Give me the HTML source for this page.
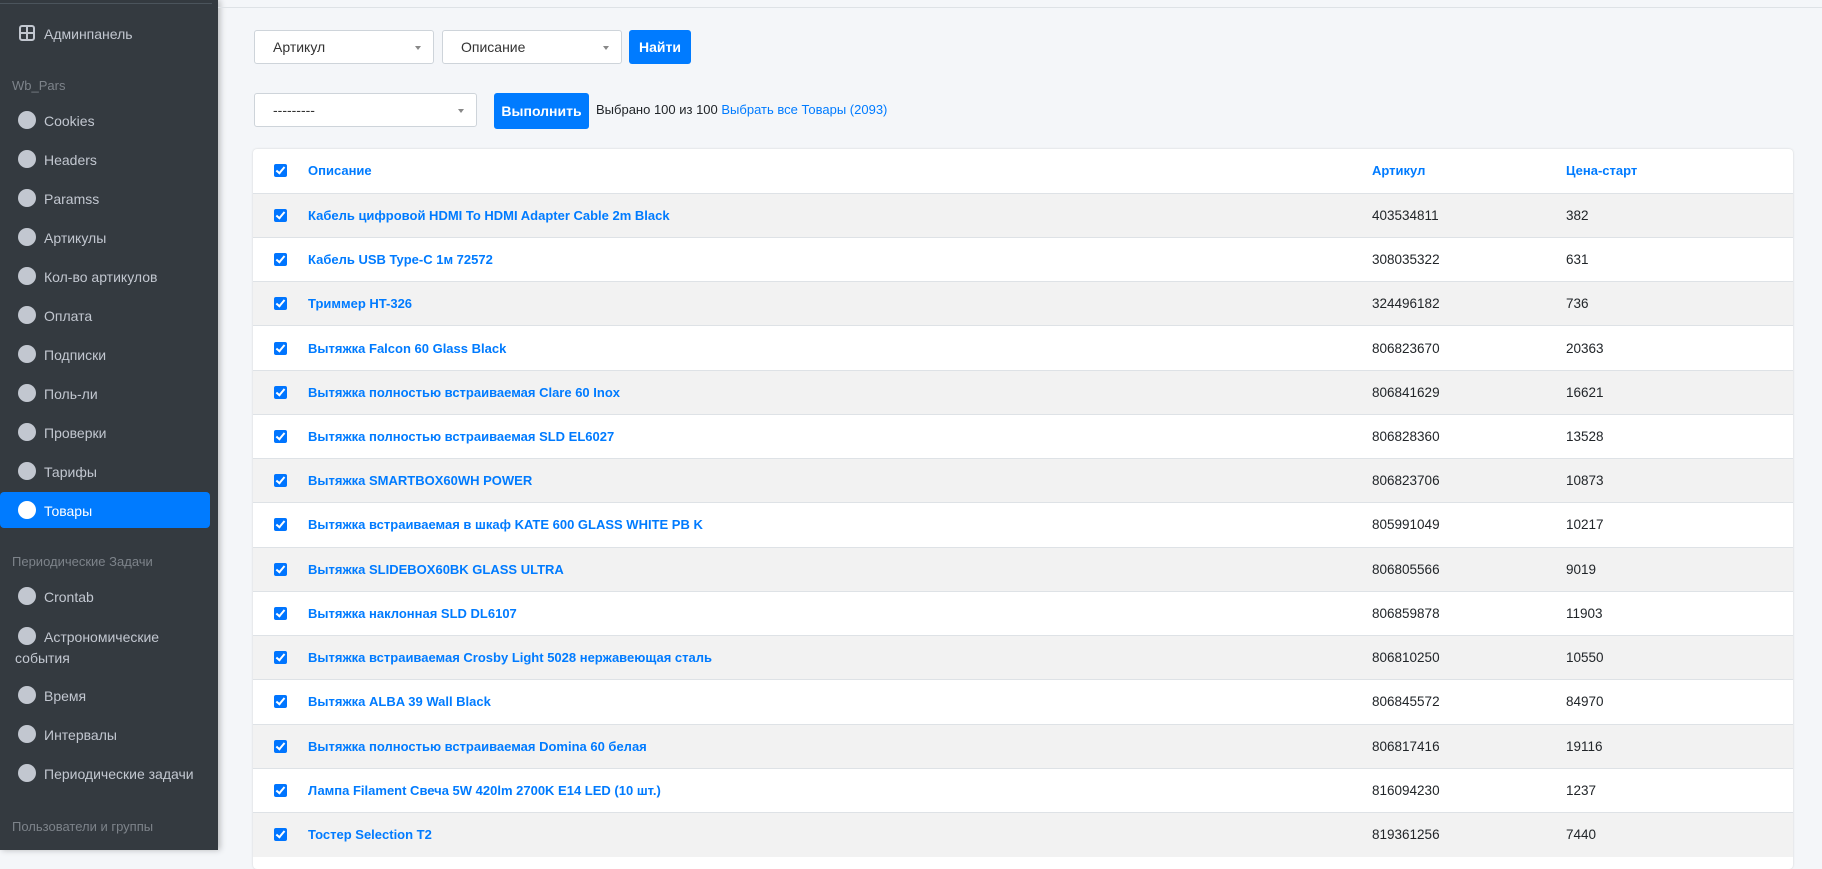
<!DOCTYPE html>
<html><head><meta charset="utf-8"><style>
*{box-sizing:border-box;margin:0;padding:0}
body{width:1822px;height:850px;overflow:hidden;background:#f4f6f9;font-family:"Liberation Sans",sans-serif;font-size:14px;color:#212529;position:relative}
.sb{position:absolute;left:0;top:0;width:218px;height:850px;background:#343a40;box-shadow:2px 0 6px rgba(0,0,0,.25)}
.sb .line{position:absolute;left:0;top:3px;width:212px;height:1px;background:#4b545c}
.it{position:absolute;left:0;width:210px;color:#c2c7d0;font-size:14px;line-height:20px}
.it .c{position:absolute;left:18px;top:1px;width:18px;height:18px;border-radius:50%;background:#c2c7d0}
.it span{position:absolute;left:44px;top:1px;white-space:nowrap}
.hd{position:absolute;left:12px;color:#7d838a;font-size:13px}
.act{background:#007bff;border-radius:4px;height:36px;color:#fff}
.act .c{background:#fff;top:9px}
.act span{top:9px}
.topline{position:absolute;left:218px;right:0;top:7px;height:1px;background:#dee2e6}
.sel{position:absolute;background:#fff;border:1px solid #ced4da;border-radius:3px;font-size:14px;color:#333;padding-left:18px;line-height:32px}
.sel:after{content:"";position:absolute;right:12px;top:15px;border:3.5px solid transparent;border-top:4px solid #888}
.btn{position:absolute;background:#007bff;color:#fff;border-radius:3px;font-weight:bold;font-size:14px;text-align:center}
.card{position:absolute;left:253px;top:149px;width:1540px;height:720px;background:#fff;border-radius:4px;box-shadow:0 0 2px rgba(0,0,0,.15);overflow:hidden}
table{border-collapse:collapse;width:100%}
td{height:44.24px;border-top:1px solid #dee2e6;vertical-align:middle;font-size:13.5px}
tr:first-child td{border-top:none}
tr:nth-child(even) td{background:#f2f2f2}
.cb{width:55px;padding-left:21px}
.cb i{display:block;width:13px;height:13px;background:#0075ff;border-radius:2px;position:relative}
.cb i:after{content:"";position:absolute;left:4px;top:1px;width:3px;height:7px;border:solid #fff;border-width:0 2px 2px 0;transform:rotate(40deg)}
.d{width:1064px;color:#007bff;font-weight:bold;font-size:13px}
.a{width:194px}
</style></head><body>
<div class="sb">
<div class="line"></div>
<div class="it" style="top:23px"><svg style="position:absolute;left:19px;top:2px" width="16" height="16" viewBox="0 0 16 16"><rect x="1" y="1" width="14" height="14" rx="2" fill="none" stroke="#c2c7d0" stroke-width="2"/><path d="M8 1V15M1 8H15" stroke="#c2c7d0" stroke-width="2"/></svg><span>Админпанель</span></div>
<div class="hd" style="top:78px">Wb_Pars</div>
<div class="it" style="top:110px"><div class="c"></div><span>Cookies</span></div>
<div class="it" style="top:149px"><div class="c"></div><span>Headers</span></div>
<div class="it" style="top:188px"><div class="c"></div><span>Paramss</span></div>
<div class="it" style="top:227px"><div class="c"></div><span>Артикулы</span></div>
<div class="it" style="top:266px"><div class="c"></div><span>Кол-во артикулов</span></div>
<div class="it" style="top:305px"><div class="c"></div><span>Оплата</span></div>
<div class="it" style="top:344px"><div class="c"></div><span>Подписки</span></div>
<div class="it" style="top:383px"><div class="c"></div><span>Поль-ли</span></div>
<div class="it" style="top:422px"><div class="c"></div><span>Проверки</span></div>
<div class="it" style="top:461px"><div class="c"></div><span>Тарифы</span></div>
<div class="it act" style="top:492px"><div class="c"></div><span>Товары</span></div>
<div class="hd" style="top:554px">Периодические Задачи</div>
<div class="it" style="top:586px"><div class="c"></div><span>Crontab</span></div>
<div class="it" style="top:626px"><div class="c"></div><span>Астрономические</span><span style="left:15px;top:22px">события</span></div>
<div class="it" style="top:685px"><div class="c"></div><span>Время</span></div>
<div class="it" style="top:724px"><div class="c"></div><span>Интервалы</span></div>
<div class="it" style="top:763px"><div class="c"></div><span>Периодические задачи</span></div>
<div class="hd" style="top:819px">Пользователи и группы</div>
</div>
<div class="topline"></div>
<div class="sel" style="left:254px;top:30px;width:180px;height:34px">Артикул</div>
<div class="sel" style="left:442px;top:30px;width:180px;height:34px">Описание</div>
<div class="btn" style="left:629px;top:30px;width:62px;height:34px;line-height:34px">Найти</div>
<div class="sel" style="left:254px;top:93px;width:223px;height:34px">---------</div>
<div class="btn" style="left:494px;top:93px;width:95px;height:36px;line-height:36px">Выполнить</div>
<div style="position:absolute;left:596px;top:102px;font-size:13px">Выбрано 100 из 100 <span style="color:#007bff">Выбрать все Товары (2093)</span></div>
<div class="card"><table>
<tr><td class="cb"><i></i></td><td class="d">Описание</td><td class="a" style="color:#007bff;font-weight:bold;font-size:13px">Артикул</td><td style="color:#007bff;font-weight:bold;font-size:13px">Цена-старт</td></tr>
<tr><td class="cb"><i></i></td><td class="d">Кабель цифровой HDMI To HDMI Adapter Cable 2m Black</td><td class="a">403534811</td><td>382</td></tr>
<tr><td class="cb"><i></i></td><td class="d">Кабель USB Type-C 1м 72572</td><td class="a">308035322</td><td>631</td></tr>
<tr><td class="cb"><i></i></td><td class="d">Триммер HT-326</td><td class="a">324496182</td><td>736</td></tr>
<tr><td class="cb"><i></i></td><td class="d">Вытяжка Falcon 60 Glass Black</td><td class="a">806823670</td><td>20363</td></tr>
<tr><td class="cb"><i></i></td><td class="d">Вытяжка полностью встраиваемая Clare 60 Inox</td><td class="a">806841629</td><td>16621</td></tr>
<tr><td class="cb"><i></i></td><td class="d">Вытяжка полностью встраиваемая SLD EL6027</td><td class="a">806828360</td><td>13528</td></tr>
<tr><td class="cb"><i></i></td><td class="d">Вытяжка SMARTBOX60WH POWER</td><td class="a">806823706</td><td>10873</td></tr>
<tr><td class="cb"><i></i></td><td class="d">Вытяжка встраиваемая в шкаф KATE 600 GLASS WHITE PB K</td><td class="a">805991049</td><td>10217</td></tr>
<tr><td class="cb"><i></i></td><td class="d">Вытяжка SLIDEBOX60BK GLASS ULTRA</td><td class="a">806805566</td><td>9019</td></tr>
<tr><td class="cb"><i></i></td><td class="d">Вытяжка наклонная SLD DL6107</td><td class="a">806859878</td><td>11903</td></tr>
<tr><td class="cb"><i></i></td><td class="d">Вытяжка встраиваемая Crosby Light 5028 нержавеющая сталь</td><td class="a">806810250</td><td>10550</td></tr>
<tr><td class="cb"><i></i></td><td class="d">Вытяжка ALBA 39 Wall Black</td><td class="a">806845572</td><td>84970</td></tr>
<tr><td class="cb"><i></i></td><td class="d">Вытяжка полностью встраиваемая Domina 60 белая</td><td class="a">806817416</td><td>19116</td></tr>
<tr><td class="cb"><i></i></td><td class="d">Лампа Filament Свеча 5W 420lm 2700K E14 LED (10 шт.)</td><td class="a">816094230</td><td>1237</td></tr>
<tr><td class="cb"><i></i></td><td class="d">Тостер Selection T2</td><td class="a">819361256</td><td>7440</td></tr>
</table></div>
</body></html>
